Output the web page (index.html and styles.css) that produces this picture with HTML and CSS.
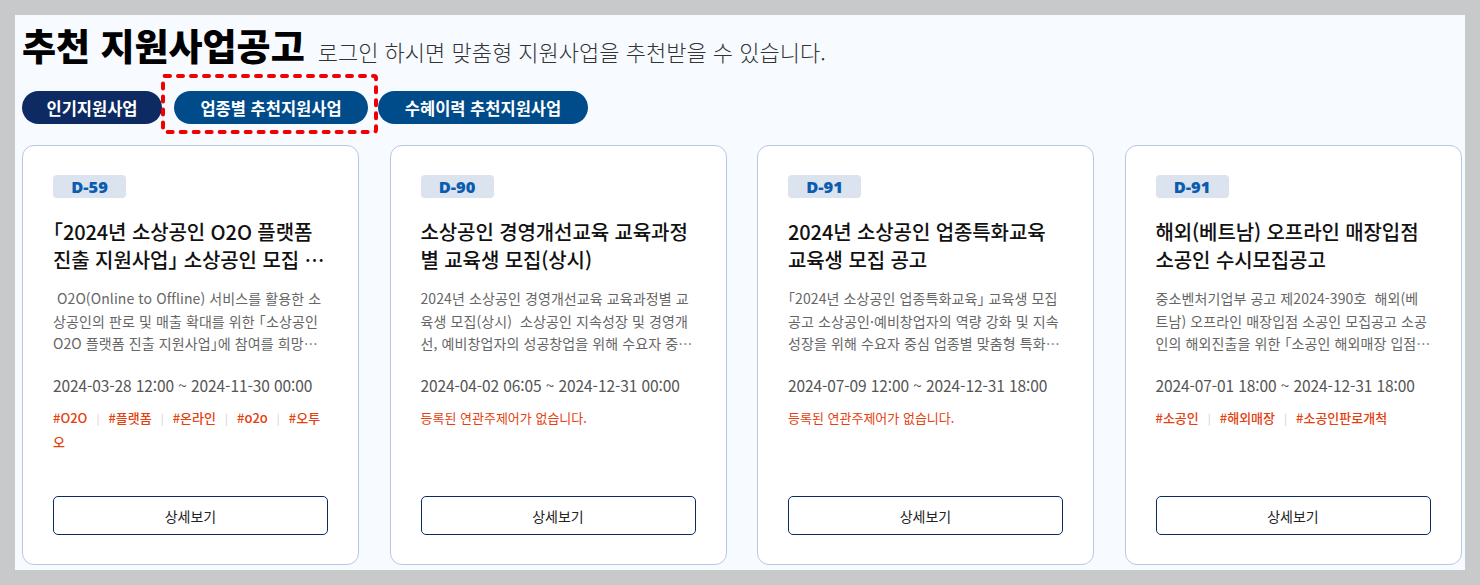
FILE: index.html
```html
<!DOCTYPE html>
<html lang="ko">
<head>
<meta charset="utf-8">
<title>추천 지원사업공고</title>
<link rel="stylesheet" href="styles.css">
</head>
<body>
<main class="panel">
  <header class="head">
    <h1 class="title">추천 지원사업공고</h1>
    <p class="subtitle">로그인 하시면 맞춤형 지원사업을 추천받을 수 있습니다.</p>
  </header>
  <nav class="tabs">
    <a class="tab tab-dark">인기지원사업</a>
    <span class="tab-wrap">
      <a class="tab">업종별 추천지원사업</a>
      <svg class="focus-ring" width="217" height="60" viewBox="0 0 217 60"><rect x="2" y="2" width="213" height="56" rx="2" fill="none" stroke="#f00000" stroke-width="4" stroke-dasharray="5 8" stroke-linecap="round"/></svg>
    </span>
    <a class="tab">수혜이력 추천지원사업</a>
  </nav>
  <section class="cards">
    <article class="card">
      <span class="dday">D-59</span>
      <h2 class="card-title">「2024년 소상공인 O2O 플랫폼 진출 지원사업」 소상공인 모집 공고</h2>
      <p class="desc">&nbsp;O2O(Online to Offline) 서비스를 활용한 소상공인의 판로 및 매출 확대를 위한 「소상공인 O2O 플랫폼 진출 지원사업」에 참여를 희망하는 소상공인을 모집합니다.</p>
      <p class="date">2024-03-28 12:00 ~ 2024-11-30 00:00</p>
      <p class="tags"><span class="tag">#O2O</span><span class="sep">|</span><span class="tag">#플랫폼</span><span class="sep">|</span><span class="tag">#온라인</span><span class="sep">|</span><span class="tag">#o2o</span><span class="sep">|</span><span class="tag">#오투오</span></p>
      <a class="more">상세보기</a>
    </article>
    <article class="card">
      <span class="dday">D-90</span>
      <h2 class="card-title">소상공인 경영개선교육 교육과정별 교육생 모집(상시)</h2>
      <p class="desc">2024년 소상공인 경영개선교육 교육과정별 교육생 모집(상시)&nbsp; 소상공인 지속성장 및 경영개선, 예비창업자의 성공창업을 위해 수요자 중심의 교육을 지원합니다.</p>
      <p class="date">2024-04-02 06:05 ~ 2024-12-31 00:00</p>
      <p class="tags"><span class="none">등록된 연관주제어가 없습니다.</span></p>
      <a class="more">상세보기</a>
    </article>
    <article class="card">
      <span class="dday">D-91</span>
      <h2 class="card-title">2024년 소상공인 업종특화교육 교육생 모집 공고</h2>
      <p class="desc">「2024년 소상공인 업종특화교육」 교육생 모집 공고 소상공인·예비창업자의 역량 강화 및 지속성장을 위해 수요자 중심 업종별 맞춤형 특화교육을 지원합니다.</p>
      <p class="date">2024-07-09 12:00 ~ 2024-12-31 18:00</p>
      <p class="tags"><span class="none">등록된 연관주제어가 없습니다.</span></p>
      <a class="more">상세보기</a>
    </article>
    <article class="card">
      <span class="dday">D-91</span>
      <h2 class="card-title">해외(베트남) 오프라인 매장입점 소공인 수시모집공고</h2>
      <p class="desc">중소벤처기업부 공고 제2024-390호 &nbsp;해외(베트남) 오프라인 매장입점 소공인 모집공고 소공인의 해외진출을 위한 「소공인 해외매장 입점 지원사업」 참여 소공인을 모집합니다.</p>
      <p class="date">2024-07-01 18:00 ~ 2024-12-31 18:00</p>
      <p class="tags"><span class="tag">#소공인</span><span class="sep">|</span><span class="tag">#해외매장</span><span class="sep">|</span><span class="tag">#소공인판로개척</span></p>
      <a class="more">상세보기</a>
    </article>
  </section>
</main>
</body>
</html>
```

FILE: styles.css
```css
* { box-sizing: border-box; }
html, body { margin: 0; padding: 0; }
body {
  background: #c8c9cb;
  padding: 15px;
  font-family: "Noto Sans CJK KR", "Noto Sans", sans-serif;
  color: #222;
}
.panel {
  width: 1450px;
  height: 555px;
  background: #f7fbff;
  padding: 6px 7px 0 7px;
}
.head {
  display: flex;
  align-items: baseline;
  gap: 13px;
  height: 56px;
}
.title {
  margin: 0;
  font-size: 37px;
  font-weight: 900;
  color: #000;
  line-height: 48px;
}
.subtitle {
  margin: 0;
  font-size: 22px;
  font-weight: 300;
  color: #333;
}
.tabs {
  display: flex;
  align-items: center;
  gap: 12px;
  margin-top: 14px;
  height: 33px;
}
.tab-wrap {
  position: relative;
  display: flex;
  margin-right: -2px;
}
.tab {
  display: flex;
  align-items: center;
  justify-content: center;
  height: 33px;
  border-radius: 17px;
  background: #004b8a;
  color: #fff;
  font-size: 16.5px;
  font-weight: 700;
  white-space: nowrap;
}
.tab-dark {
  background: #0d2a62;
  width: 140px;
}
.tab-wrap .tab { width: 194px; }
.tabs > .tab:last-child { width: 210px; }
.focus-ring {
  position: absolute;
  left: -13px;
  top: -17px;
  pointer-events: none;
}
.cards {
  display: grid;
  grid-template-columns: repeat(4, 337px);
  column-gap: 30.5px;
  margin-top: 21px;
}
.card {
  height: 420px;
  background: #fff;
  border: 1px solid #bac7e2;
  border-radius: 12px;
  padding: 29px 30px 29px 30px;
  display: flex;
  flex-direction: column;
  align-items: flex-start;
}
.dday {
  display: inline-flex;
  align-items: center;
  justify-content: center;
  width: 73px;
  height: 23px;
  border-radius: 4px;
  background: #dbe3ee;
  color: #0a5cae;
  font-size: 16.5px;
  font-weight: 800;
  font-family: "Open Sans", "Noto Sans CJK KR", sans-serif;
}
.card-title {
  margin: 20px 0 0;
  font-size: 20px;
  font-weight: 500;
  line-height: 28px;
  color: #111;
  letter-spacing: -0.1px;
  font-feature-settings: "halt";
  display: -webkit-box;
  -webkit-line-clamp: 2;
  -webkit-box-orient: vertical;
  overflow: hidden;
}
.desc {
  margin: 13px 0 0;
  font-size: 14px;
  line-height: 22.5px;
  color: #666;
  letter-spacing: 0.1px;
  font-feature-settings: "halt";
  display: -webkit-box;
  -webkit-line-clamp: 3;
  -webkit-box-orient: vertical;
  overflow: hidden;
}
.date {
  margin: 19px 0 0;
  font-size: 15.5px;
  line-height: 22px;
  color: #555;
  letter-spacing: -0.1px;
}
.tags {
  margin: 10px 0 0;
  font-size: 13px;
  line-height: 24px;
  color: #e5400e;
  font-weight: 500;
}
.sep {
  color: #cfcfcf;
  font-size: 11px;
  font-weight: 400;
  margin: 0 9px;
}
.none { color: #e5400e; font-weight: 400; }
.more {
  margin-top: auto;
  width: 275px;
  height: 39px;
  border: 1px solid #0d2a62;
  border-radius: 5px;
  display: flex;
  align-items: center;
  justify-content: center;
  font-size: 14px;
  color: #222;
}
```
